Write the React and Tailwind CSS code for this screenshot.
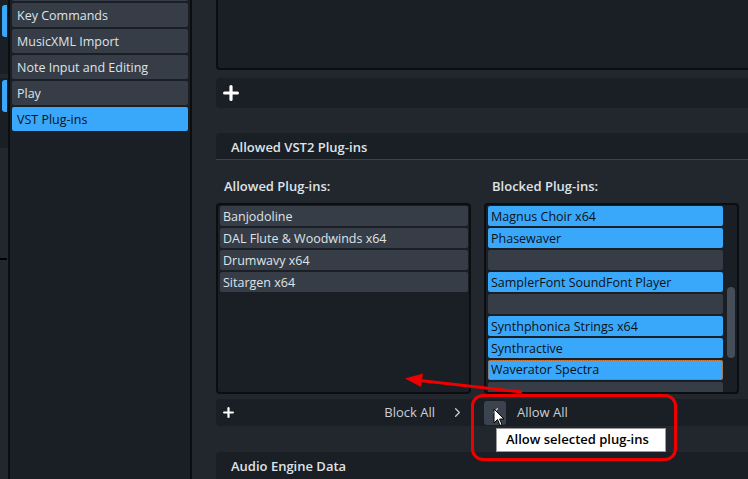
import { Plus, ChevronRight, ChevronLeft } from 'lucide-react';

const sideItems = ['Key Commands', 'MusicXML Import', 'Note Input and Editing', 'Play'];

const allowed = ['Banjodoline', 'DAL Flute & Woodwinds x64', 'Drumwavy x64', 'Sitargen x64'];

// unselected rows show as plain grey bars
const blocked = [
  { name: 'Magnus Choir x64', sel: true },
  { name: 'Phasewaver', sel: true },
  { name: '', sel: false },
  { name: 'SamplerFont SoundFont Player', sel: true },
  { name: '', sel: false },
  { name: 'Synthphonica Strings x64', sel: true },
  { name: 'Synthractive', sel: true },
  { name: 'Waverator Spectra', sel: true, focus: true },
  { name: '', sel: false },
];

export default function App() {
  return (
    <div className="relative flex w-[748px] h-[479px] overflow-hidden bg-[#22272e] text-[12.5px] text-[#dfe3e8] font-['Open_Sans',sans-serif]">
      {/* far left strip */}
      <div className="relative w-[8px] shrink-0 flex flex-col">
        <div className="h-[74px] bg-[#1a1e25] rounded-br-[3px] pt-[5px] pl-[2px]">
          <div className="w-[5px] h-[32px] rounded-l-[3px] bg-[#3aa8fa]" />
        </div>
        <div className="mt-[4px] h-[70px] bg-[#1a1e25] pt-[2px] pl-[2px]">
          <div className="w-[5px] h-[32px] rounded-l-[3px] bg-[#3aa8fa]" />
        </div>
        <div className="absolute left-0 top-[258px] w-[7px] h-[2px] bg-black" />
      </div>
      <div className="w-[2px] shrink-0 bg-[#0b0d10]" />

      {/* sidebar */}
      <div className="w-[180px] shrink-0 bg-[#1a1e25] px-[2px]">
        <div className="-mt-[23px] flex flex-col gap-[2px]">
          <div className="h-[24px] rounded-[2px] bg-[#363d47]" />
          {sideItems.map((s) => (
            <div key={s} className="h-[24px] rounded-[2px] bg-[#363d47] px-[5px] pt-[2px] flex items-center whitespace-nowrap">
              {s}
            </div>
          ))}
          <div className="h-[24px] rounded-[2px] bg-[#3aa8fa] px-[5px] pt-[2px] flex items-center text-[#0d1117]">VST Plug-ins</div>
        </div>
      </div>
      <div className="w-[2px] shrink-0 bg-[#0b0d10]" />

      {/* main */}
      <div className="flex-1 min-w-0 pl-[24px] flex flex-col">
        <div className="h-[70px] shrink-0 bg-[#1a1e25] border-l-2 border-b-2 border-[#0b0d10] rounded-bl-[4px]" />
        <div className="mt-[8px] h-[30px] shrink-0 bg-[#1a1e25] rounded-l-[4px] flex items-center pl-[4px]">
          <Plus size={22} strokeWidth={3.5} className="text-white" />
        </div>

        <div className="mt-[25px] h-[27px] shrink-0 bg-[#1a1e25] border-b border-[#3c434d] rounded-tl-[4px] flex items-center pl-[15px] pt-[3px] text-[13px] font-semibold">
          Allowed VST2 Plug-ins
        </div>

        <div className="h-[43px] shrink-0 flex items-center gap-[13px] pt-[10px] text-[13px] font-semibold">
          <div className="w-[255px] pl-[8px]">Allowed Plug-ins:</div>
          <div className="w-[255px] pl-[8px]">Blocked Plug-ins:</div>
        </div>

        <div className="h-[191px] shrink-0 flex gap-[13px]">
          <div className="w-[255px] bg-[#1a1e25] border-2 border-[#0b0d10] rounded-[4px] pl-[2px] pr-[1px] pt-[1px] flex flex-col gap-[2px] overflow-hidden">
            {allowed.map((a) => (
              <div key={a} className="h-[20px] shrink-0 rounded-[2px] bg-[#363d47] px-[3px] pt-[2px] flex items-center whitespace-nowrap">
                {a}
              </div>
            ))}
          </div>
          <div className="w-[255px] bg-[#1a1e25] border-2 border-[#0b0d10] rounded-[4px] pl-[2px] pt-[1px] flex overflow-hidden">
            <div className="flex-1 flex flex-col gap-[2px]">
              {blocked.map((b, i) => (
                <div
                  key={i}
                  className={
                    b.sel
                      ? b.focus
                        ? 'h-[20px] shrink-0 rounded-[2px] bg-[#3aa8fa] border border-dotted border-[#b8652a] px-[2px] pt-[1px] flex items-center whitespace-nowrap text-[#0d1117]'
                        : 'h-[20px] shrink-0 rounded-[2px] bg-[#3aa8fa] px-[3px] pt-[2px] flex items-center whitespace-nowrap text-[#0d1117]'
                      : 'h-[20px] shrink-0 rounded-[2px] bg-[#363d47]'
                  }
                >
                  {b.name}
                </div>
              ))}
            </div>
            <div className="w-[14px] shrink-0 pl-[4px] pr-[2px] pt-[81px]">
              <div className="h-[71px] rounded-full bg-[#454d58]" />
            </div>
          </div>
        </div>

        <div className="mt-[5px] h-[27px] shrink-0 bg-[#1a1e25] rounded-l-[4px] flex items-center">
          <div className="w-[255px] flex items-center pl-[5px] pr-[6px]">
            <Plus size={15} strokeWidth={3.5} className="text-white" />
            <span className="ml-auto text-[13px] text-[#c9cfd6]">Block All</span>
            <ChevronRight size={15} strokeWidth={2} className="ml-[15px] text-[#c9cfd6]" />
          </div>
          <div className="ml-[13px] flex items-center">
            <div className="w-[22px] h-[24px] rounded-[3px] bg-[#3b434e] flex items-center justify-center">
              <ChevronLeft size={15} strokeWidth={2} className="text-[#c9cfd6]" />
            </div>
            <span className="ml-[11px] text-[13px] text-[#c9cfd6]">Allow All</span>
          </div>
        </div>

        <div className="mt-[26px] h-[30px] shrink-0 bg-[#1a1e25] rounded-tl-[4px] flex items-center pl-[15px] text-[13px] font-semibold">
          Audio Engine Data
        </div>
      </div>

      {/* annotation overlays */}
      <svg className="absolute left-0 top-0 pointer-events-none" width="748" height="479">
        <line x1="522" y1="392" x2="420" y2="380.5" stroke="#ee0000" strokeWidth="3" />
        <polygon points="405,378.5 423,373.5 421,387" fill="#ee0000" />
      </svg>
      <div className="absolute left-[471px] top-[394px] w-[206px] h-[67px] border-[3px] border-[#ee0000] rounded-[12px] pointer-events-none" />
      <div className="absolute left-[496px] top-[428px] w-[170px] h-[24px] bg-white border border-[#9a9a9a] flex items-center pl-[9px] text-[13px] font-semibold text-black whitespace-nowrap">
        Allow selected plug-ins
      </div>
      <svg className="absolute left-[493px] top-[408px]" width="12" height="19" viewBox="0 0 12 19">
        <path d="M1 1 L1 15 L4.5 11.5 L7 17.5 L9 16.6 L6.6 11 L11 11 Z" fill="#fff" stroke="#000" strokeWidth="1" strokeLinejoin="round" />
      </svg>
    </div>
  );
}
